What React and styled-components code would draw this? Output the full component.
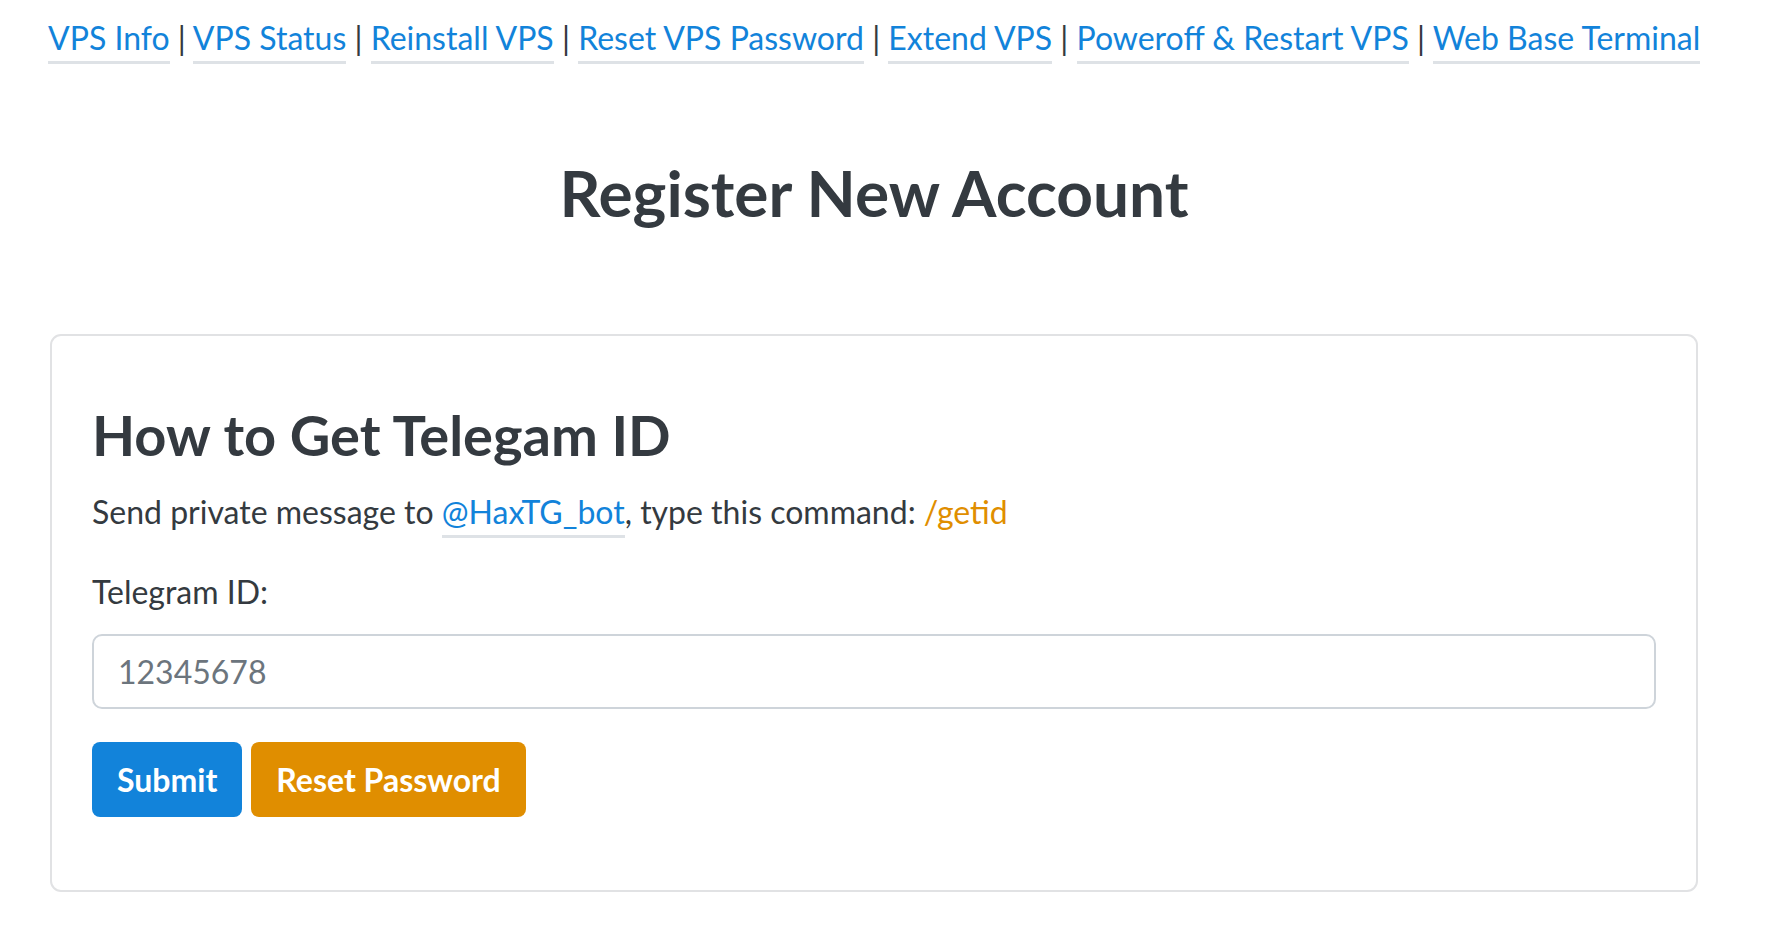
import React from 'react';
import styled, { createGlobalStyle } from 'styled-components';

const GlobalStyle = createGlobalStyle`
    body{
        margin: 0;
        background: #fff;
        font-family: Lato, "Open Sans", sans-serif;
        font-size: 32px;
        line-height: 1.5;
        color: #343a40;
    }
`

const Page = styled.div`
    width: 1652px;
    margin-left: 48px;
    padding-top: 14px;
`

const Nav = styled.nav`
    white-space: nowrap;
    a{
        color: #1283da;
        text-decoration: none;
        border-bottom: 3px solid #dee2e6;
        padding-bottom: 4px;
    }
`

const Title = styled.h1`
    margin: 93px 0 0;
    font-size: 64px;
    line-height: 1.2;
    font-weight: 700;
    text-align: center;
`

const Card = styled.section`
    margin: 102px 2px 0;
    border: 2px solid #e1e2e4;
    border-radius: 11px;
    padding: 65px 40px 73px;
`

const CardTitle = styled.h2`
    margin: 0;
    font-size: 56px;
    line-height: 1.2;
    font-weight: 700;
`

const Text = styled.p`
    margin: 20px 0 0;
    a{
        color: #1283da;
        text-decoration: none;
        border-bottom: 3px solid #dee2e6;
        padding-bottom: 4px;
    }
`

const Command = styled.code`
    font-family: inherit;
    color: #e08e00;
`

const Label = styled.label`
    display: block;
    margin-top: 32px;
`

const Input = styled.input`
    display: block;
    box-sizing: border-box;
    width: 100%;
    height: 75px;
    margin-top: 18px;
    padding: 0 24px;
    border: 2px solid #ced4da;
    border-radius: 10px;
    font-family: inherit;
    font-size: 32px;
    color: #343a40;
    &::placeholder{
        color: #6c757d;
    }
`

const Actions = styled.div`
    display: flex;
    gap: 9px;
    margin-top: 33px;
`

const Button = styled.button`
    height: 75px;
    padding: 0 25px;
    border: none;
    border-radius: 8px;
    background: ${props => props.$tone === 'warn' ? '#e08e00' : '#1283da'};
    color: #fff;
    font-family: inherit;
    font-size: 32px;
    font-weight: 700;
`

const links = [
    'VPS Info',
    'VPS Status',
    'Reinstall VPS',
    'Reset VPS Password',
    'Extend VPS',
    'Poweroff & Restart VPS',
    'Web Base Terminal'
]

export default function App() {
    return (
        <>
            <GlobalStyle />
            <Page>
                <Nav>
                    {links.map((l, i) => (
                        <React.Fragment key={l}>
                            {i > 0 && ' | '}
                            <a href="#">{l}</a>
                        </React.Fragment>
                    ))}
                </Nav>
                <Title>Register New Account</Title>
                <Card>
                    <CardTitle>How to Get Telegam ID</CardTitle>
                    <Text>
                        Send private message to <a href="#">@HaxTG_bot</a>, type this command: <Command>/getid</Command>
                    </Text>
                    <Label htmlFor="tgid">Telegram ID:</Label>
                    <Input id="tgid" placeholder="12345678" />
                    <Actions>
                        <Button>Submit</Button>
                        <Button $tone="warn">Reset Password</Button>
                    </Actions>
                </Card>
            </Page>
        </>
    )
}
